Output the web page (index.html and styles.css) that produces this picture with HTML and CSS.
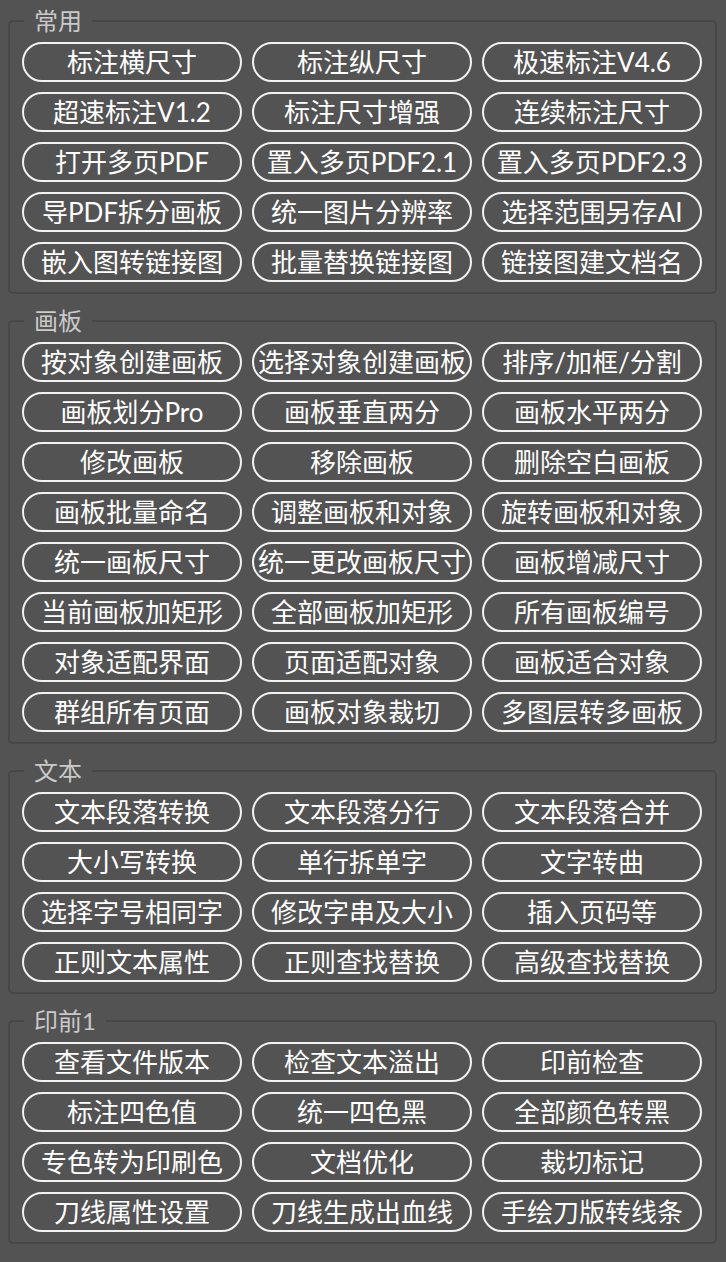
FILE: index.html
```html
<!DOCTYPE html>
<html lang="zh-CN">
  <head>
    <meta charset="UTF-8" />
    <meta name="viewport" content="width=device-width, initial-scale=1.0" />
    <title>工具面板</title>
    <link rel="stylesheet" href="styles.css">
  </head>
  <body>
    <fieldset class="group">
      <legend>常用</legend>
      <div class="grid">
        <button>标注横尺寸</button>
        <button>标注纵尺寸</button>
        <button>极速标注V4.6</button>
        <button>超速标注V1.2</button>
        <button>标注尺寸增强</button>
        <button>连续标注尺寸</button>
        <button>打开多页PDF</button>
        <button>置入多页PDF2.1</button>
        <button>置入多页PDF2.3</button>
        <button>导PDF拆分画板</button>
        <button>统一图片分辨率</button>
        <button>选择范围另存AI</button>
        <button>嵌入图转链接图</button>
        <button>批量替换链接图</button>
        <button>链接图建文档名</button>
      </div>
    </fieldset>

    <fieldset class="group">
      <legend>画板</legend>
      <div class="grid">
        <button>按对象创建画板</button>
        <button>选择对象创建画板</button>
        <button>排序/加框/分割</button>
        <button>画板划分Pro</button>
        <button>画板垂直两分</button>
        <button>画板水平两分</button>
        <button>修改画板</button>
        <button>移除画板</button>
        <button>删除空白画板</button>
        <button>画板批量命名</button>
        <button>调整画板和对象</button>
        <button>旋转画板和对象</button>
        <button>统一画板尺寸</button>
        <button>统一更改画板尺寸</button>
        <button>画板增减尺寸</button>
        <button>当前画板加矩形</button>
        <button>全部画板加矩形</button>
        <button>所有画板编号</button>
        <button>对象适配界面</button>
        <button>页面适配对象</button>
        <button>画板适合对象</button>
        <button>群组所有页面</button>
        <button>画板对象裁切</button>
        <button>多图层转多画板</button>
      </div>
    </fieldset>

    <fieldset class="group">
      <legend>文本</legend>
      <div class="grid">
        <button>文本段落转换</button>
        <button>文本段落分行</button>
        <button>文本段落合并</button>
        <button>大小写转换</button>
        <button>单行拆单字</button>
        <button>文字转曲</button>
        <button>选择字号相同字</button>
        <button>修改字串及大小</button>
        <button>插入页码等</button>
        <button>正则文本属性</button>
        <button>正则查找替换</button>
        <button>高级查找替换</button>
      </div>
    </fieldset>

    <fieldset class="group">
      <legend>印前1</legend>
      <div class="grid">
        <button>查看文件版本</button>
        <button>检查文本溢出</button>
        <button>印前检查</button>
        <button>标注四色值</button>
        <button>统一四色黑</button>
        <button>全部颜色转黑</button>
        <button>专色转为印刷色</button>
        <button>文档优化</button>
        <button>裁切标记</button>
        <button>刀线属性设置</button>
        <button>刀线生成出血线</button>
        <button>手绘刀版转线条</button>
      </div>
    </fieldset>
  </body>
</html>
```

FILE: styles.css
```css
body {
  margin: 0;
  padding: 10px 9px 0 8px;
  background-color: #535353;
  font-family: Lato, "Noto Sans CJK SC", sans-serif;
}
.group {
  margin: 0 0 16px;
  padding: 10px 13px 10px 12px;
  border: 2px solid #474747;
  border-radius: 5px;
  min-width: 0;
}
.group legend {
  margin-left: 2px;
  padding: 0 10px;
  font-size: 24px;
  line-height: 22px;
  color: #c9c9c9;
}
.grid {
  display: grid;
  grid-template-columns: repeat(3, 220px);
  gap: 10px;
}
.grid button {
  height: 40px;
  padding: 0;
  border: 2px solid #f2f2f2;
  border-radius: 20px;
  background: transparent;
  color: #fff;
  font-family: inherit;
  font-size: 26px;
  line-height: 36px;
  white-space: nowrap;
  overflow: visible;
  cursor: pointer;
}
```
